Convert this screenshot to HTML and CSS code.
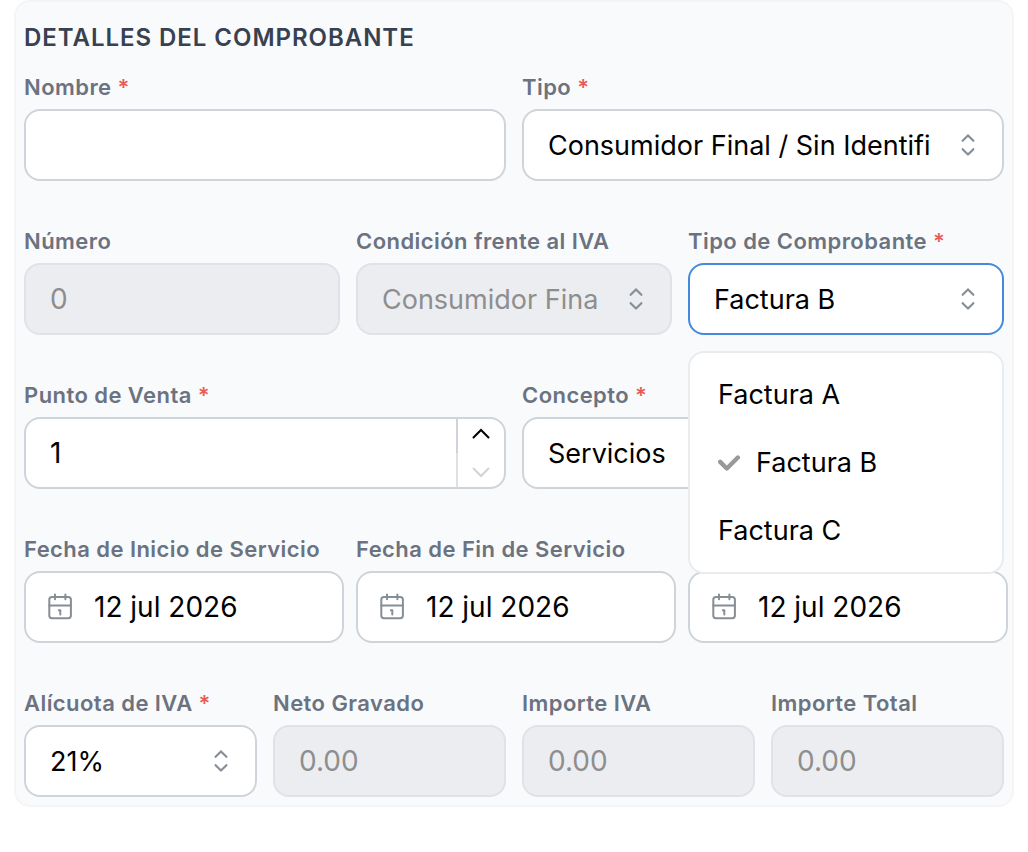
FILE: index.html
```html
<!DOCTYPE html>
<html lang="es">
<head>
    <meta charset="UTF-8">
    <meta name="viewport" content="width=device-width, initial-scale=1.0">
    <title>Detalles del Comprobante</title>
    <link rel="stylesheet" href="styles.css">
</head>
<body>

    <!-- Shared icons -->
    <svg class="icon-defs" aria-hidden="true">
        <symbol id="icon-selector" viewBox="0 0 15 15">
            <path fill="currentColor" d="M4.93179 5.43179C4.75605 5.60753 4.75605 5.89245 4.93179 6.06819C5.10753 6.24392 5.39245 6.24392 5.56819 6.06819L7.49999 4.13638L9.43179 6.06819C9.60753 6.24392 9.89245 6.24392 10.0682 6.06819C10.2439 5.89245 10.2439 5.60753 10.0682 5.43179L7.81819 3.18179C7.73379 3.0974 7.61933 3.04999 7.49999 3.04999C7.38064 3.04999 7.26618 3.0974 7.18179 3.18179L4.93179 5.43179ZM10.0682 9.56819C10.2439 9.39245 10.2439 9.10753 10.0682 8.93179C9.89245 8.75606 9.60753 8.75606 9.43179 8.93179L7.49999 10.8636L5.56819 8.93179C5.39245 8.75606 5.10753 8.75606 4.93179 8.93179C4.75605 9.10753 4.75605 9.39245 4.93179 9.56819L7.18179 11.8182C7.35753 11.9939 7.64245 11.9939 7.81819 11.8182L10.0682 9.56819Z"/>
        </symbol>
        <symbol id="icon-calendar" viewBox="0 0 28 28">
            <g fill="none" stroke="currentColor" stroke-width="2" stroke-linecap="round" stroke-linejoin="round">
                <rect x="3.3" y="4" width="21.6" height="21.2" rx="2.6"/>
                <path d="M3.3 12.6h21.6M9 1.4v4.8M19.4 1.4v4.8"/>
                <path d="M12.8 17.2h1.5v4.2"/>
            </g>
        </symbol>
    </svg>

    <form class="panel">
        <h2 class="panel-title">Detalles del Comprobante</h2>

        <div class="rows">
            <div class="row cols-2">
                <div class="field">
                    <label for="nombre">Nombre <span class="required">*</span></label>
                    <input class="control" type="text" id="nombre">
                </div>
                <div class="field">
                    <label for="tipo">Tipo <span class="required">*</span></label>
                    <div class="select-box">
                        <select class="control" id="tipo">
                            <option>Consumidor Final / Sin Identifi</option>
                        </select>
                        <svg class="selector"><use href="#icon-selector"/></svg>
                    </div>
                </div>
            </div>

            <div class="row cols-3">
                <div class="field">
                    <label for="numero">Número</label>
                    <input class="control" type="text" id="numero" value="0" disabled>
                </div>
                <div class="field">
                    <label for="condicion">Condición frente al IVA</label>
                    <div class="select-box">
                        <select class="control" id="condicion" disabled>
                            <option>Consumidor Fina</option>
                        </select>
                        <svg class="selector"><use href="#icon-selector"/></svg>
                    </div>
                </div>
                <div class="field">
                    <label for="comprobante">Tipo de Comprobante <span class="required">*</span></label>
                    <div class="select-box">
                        <select class="control active" id="comprobante">
                            <option>Factura A</option>
                            <option selected>Factura B</option>
                            <option>Factura C</option>
                        </select>
                        <svg class="selector"><use href="#icon-selector"/></svg>
                        <ul class="dropdown" role="listbox" aria-label="Tipo de Comprobante">
                            <li role="option" aria-selected="false">Factura A</li>
                            <li role="option" aria-selected="true">
                                <svg class="check" viewBox="0 0 10 7"><path d="M4 4.586L1.707 2.293A1 1 0 1 0 .293 3.707l3 3a.997.997 0 0 0 1.414 0l5-5A1 1 0 1 0 8.293.293L4 4.586z"/></svg>
                                Factura B
                            </li>
                            <li role="option" aria-selected="false">Factura C</li>
                        </ul>
                    </div>
                </div>
            </div>

            <div class="row cols-2">
                <div class="field">
                    <label for="punto-venta">Punto de Venta <span class="required">*</span></label>
                    <div class="control number-box">
                        <input type="number" id="punto-venta" value="1" min="1">
                        <div class="stepper">
                            <button type="button" id="step-up" aria-label="Aumentar">
                                <svg viewBox="0 0 20 12"><path d="M2.5 9.5L10 2l7.5 7.5"/></svg>
                            </button>
                            <button type="button" id="step-down" aria-label="Disminuir" disabled>
                                <svg viewBox="0 0 20 12"><path d="M2.5 2.5L10 10l7.5-7.5"/></svg>
                            </button>
                        </div>
                    </div>
                </div>
                <div class="field">
                    <label for="concepto">Concepto <span class="required">*</span></label>
                    <div class="select-box">
                        <select class="control" id="concepto">
                            <option>Servicios</option>
                        </select>
                        <svg class="selector"><use href="#icon-selector"/></svg>
                    </div>
                </div>
            </div>

            <div class="row cols-3 dates">
                <div class="field">
                    <label for="fecha-inicio">Fecha de Inicio de Servicio</label>
                    <button type="button" class="control date" id="fecha-inicio">
                        <svg class="calendar"><use href="#icon-calendar"/></svg>12 jul 2026
                    </button>
                </div>
                <div class="field">
                    <label for="fecha-fin">Fecha de Fin de Servicio</label>
                    <button type="button" class="control date" id="fecha-fin">
                        <svg class="calendar"><use href="#icon-calendar"/></svg>12 jul 2026
                    </button>
                </div>
                <div class="field no-label">
                    <button type="button" class="control date">
                        <svg class="calendar"><use href="#icon-calendar"/></svg>12 jul 2026
                    </button>
                </div>
            </div>

            <div class="row cols-4">
                <div class="field">
                    <label for="alicuota">Alícuota de IVA <span class="required">*</span></label>
                    <div class="select-box">
                        <select class="control" id="alicuota">
                            <option>21%</option>
                        </select>
                        <svg class="selector"><use href="#icon-selector"/></svg>
                    </div>
                </div>
                <div class="field">
                    <label for="neto">Neto Gravado</label>
                    <input class="control" type="text" id="neto" value="0.00" disabled>
                </div>
                <div class="field">
                    <label for="importe-iva">Importe IVA</label>
                    <input class="control" type="text" id="importe-iva" value="0.00" disabled>
                </div>
                <div class="field">
                    <label for="importe-total">Importe Total</label>
                    <input class="control" type="text" id="importe-total" value="0.00" disabled>
                </div>
            </div>
        </div>
    </form>

    <script>
        const puntoVenta = document.getElementById('punto-venta');
        const stepDown = document.getElementById('step-down');

        // The minimum is 1, so the down arrow is off there
        function updateStepper() {
            stepDown.disabled = Number(puntoVenta.value) <= 1;
        }

        document.getElementById('step-up').onclick = function () {
            puntoVenta.stepUp();
            updateStepper();
        };

        stepDown.onclick = function () {
            puntoVenta.stepDown();
            updateStepper();
        };

        puntoVenta.oninput = updateStepper;
    </script>

</body>
</html>
```

FILE: styles.css
```css
/* General Styles */
* {
    margin: 0;
    padding: 0;
    box-sizing: border-box;
}

body {
    font-family: Inter, "Liberation Sans", sans-serif;
    background-color: white;
    padding: 0 14px;
}

.icon-defs {
    display: none;
}

.panel {
    background-color: #f9fafc;
    border: 2px solid #f4f5f7;
    border-radius: 16px;
    padding: 8px;
}

.panel-title {
    margin: 10px 0 18px;
    font-size: 24px;
    line-height: 36px;
    font-weight: 600;
    letter-spacing: 0.04em;
    text-transform: uppercase;
    color: #374151;
}

/* Rows and fields */
.rows {
    display: flex;
    flex-direction: column;
    gap: 47px;
}

.row {
    display: grid;
    gap: 16px;
}

.cols-2 {
    grid-template-columns: repeat(2, minmax(0, 1fr));
}

.cols-3 {
    grid-template-columns: repeat(3, minmax(0, 1fr));
}

.cols-4 {
    grid-template-columns: repeat(4, minmax(0, 1fr));
}

.dates {
    gap: 12px;
    margin-right: -4px;
}

.field {
    display: flex;
    flex-direction: column;
    gap: 9px;
}

.no-label {
    justify-content: flex-end;
}

label {
    font-size: 22px;
    line-height: 26px;
    font-weight: 600;
    letter-spacing: 0.02em;
    color: #6b7280;
    white-space: nowrap;
}

.required {
    color: #ea5a52;
}

.control {
    display: block;
    width: 100%;
    height: 72px;
    padding: 0 24px;
    background-color: white;
    border: 2px solid #ced4da;
    border-radius: 16px;
    font-family: inherit;
    font-size: 28px;
    color: black;
    outline: none;
}

.control:disabled {
    background-color: #ecedf1;
    border-color: #e0e2e8;
    color: #8e8e8e;
    opacity: 1;
}

.control.active {
    border-color: #438adf;
}

/* Select */
.select-box {
    position: relative;
}

.select-box select {
    appearance: none;
    padding-right: 68px;
    font-size: 27px;
}

.selector {
    position: absolute;
    top: 18px;
    right: 18px;
    width: 36px;
    height: 36px;
    color: #868e96;
    pointer-events: none;
}

.dropdown {
    position: absolute;
    top: 88px;
    left: 0;
    right: 0;
    z-index: 10;
    display: flex;
    flex-direction: column;
    gap: 1px;
    padding: 8px;
    background-color: white;
    border: 2px solid #e9ecef;
    border-radius: 16px;
    list-style: none;
}

.dropdown li {
    display: flex;
    align-items: center;
    gap: 16px;
    height: 67px;
    padding: 0 20px;
    font-size: 27px;
}

.check {
    width: 22px;
    height: 16px;
    fill: #999;
}

/* Number input */
.number-box {
    display: flex;
    padding-right: 0;
}

.number-box input {
    flex: 1;
    min-width: 0;
    border: none;
    outline: none;
    background: none;
    font: inherit;
    appearance: textfield;
}

.number-box input::-webkit-inner-spin-button {
    appearance: none;
}

.stepper {
    display: flex;
    flex-direction: column;
    width: 48px;
}

.stepper button {
    flex: 1;
    display: flex;
    align-items: center;
    justify-content: center;
    padding-bottom: 4px;
    background: none;
    border: none;
    border-left: 2px solid #ced4da;
    color: black;
}

.stepper button:last-child {
    padding: 4px 0 0;
}

.stepper button:disabled {
    border-left-color: #dee2e6;
    color: #ced4da;
}

.stepper svg {
    width: 20px;
    height: 12px;
    fill: none;
    stroke: currentColor;
    stroke-width: 2;
    stroke-linecap: round;
}

/* Date picker button */
.date {
    display: flex;
    align-items: center;
    gap: 20px;
    padding: 0 20px;
    cursor: pointer;
}

.calendar {
    width: 28px;
    height: 28px;
    color: #868e96;
}
```
